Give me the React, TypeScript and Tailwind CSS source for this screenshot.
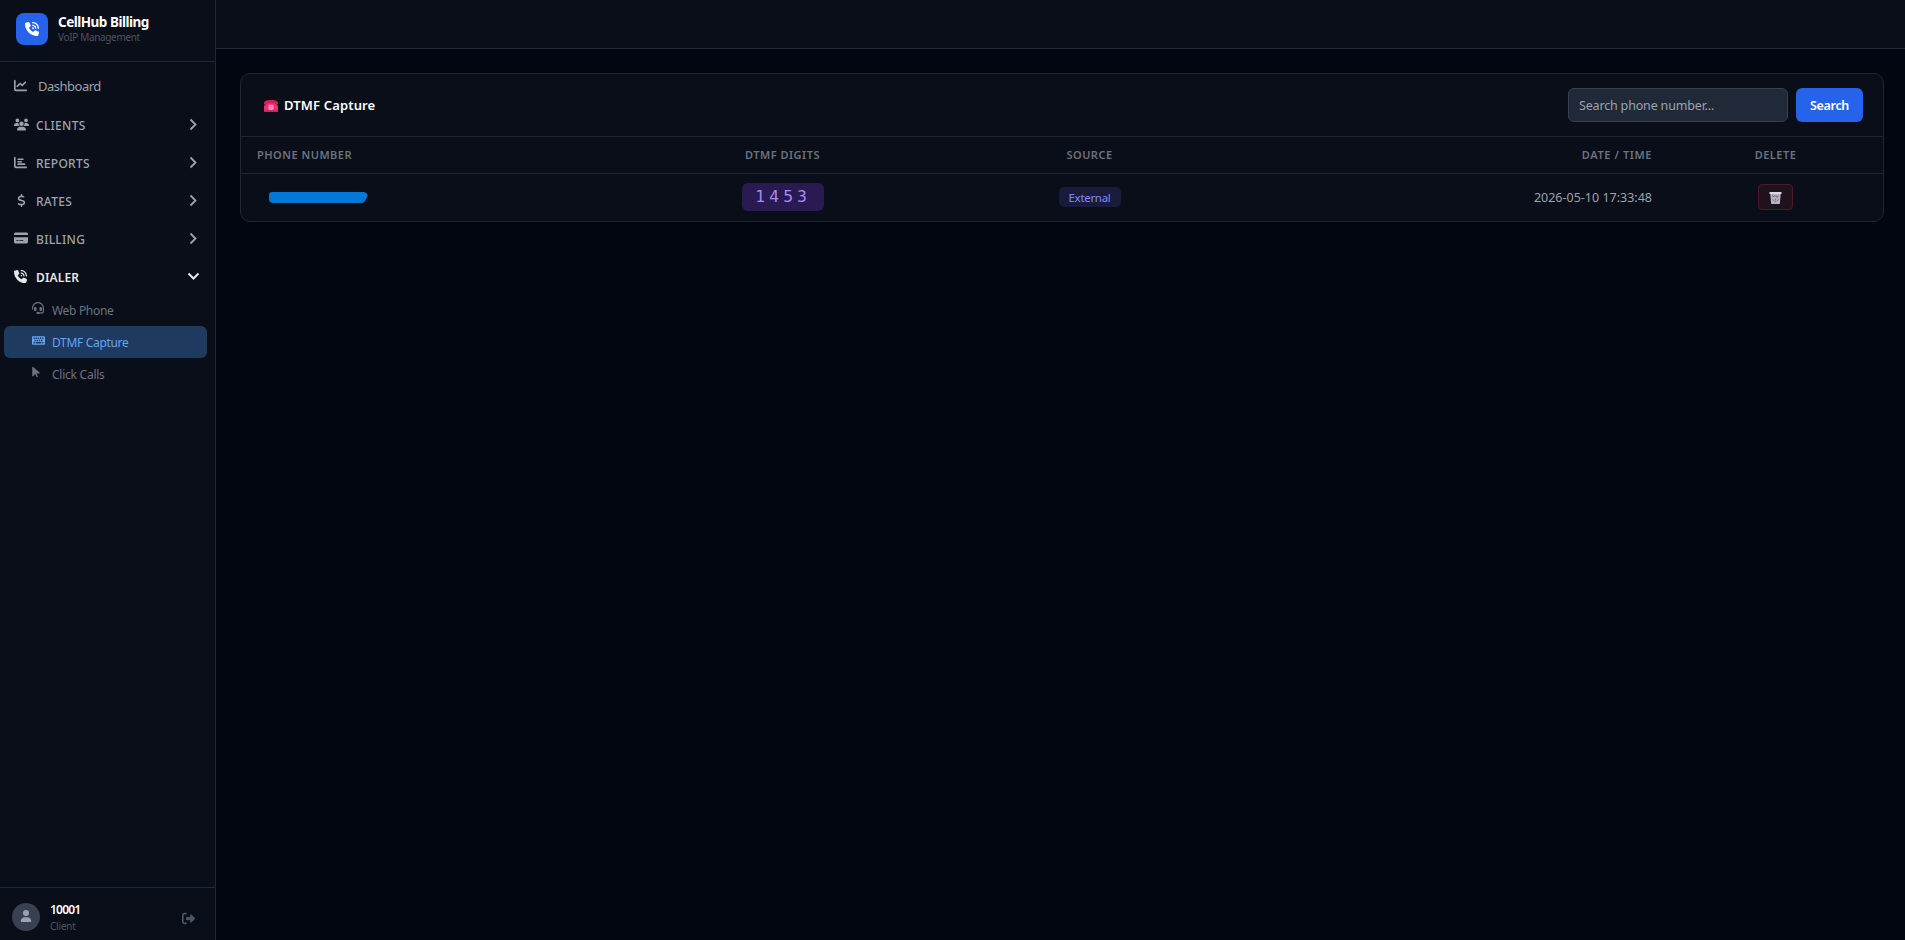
import React from "react";
import {
  FaArrowPointer,
  FaChartBar,
  FaChartLine,
  FaCreditCard,
  FaDollarSign,
  FaHeadset,
  FaPhoneVolume,
  FaRightFromBracket,
  FaUser,
  FaUsers,
} from "react-icons/fa6";
import { FaKeyboard } from "react-icons/fa";

function Chevron({ open }: { open?: boolean }) {
  return (
    <svg width="13" height="13" viewBox="0 0 13 13" fill="none" stroke="currentColor" strokeWidth={open ? 2 : 1.8} className="mb-0.5 shrink-0">
      <path d={open ? "M1.500 4.500l5 5 5-5" : "M3.500 1.500l5 5-5 5"} />
    </svg>
  );
}

const groups = [
  { label: "CLIENTS", icon: <FaUsers size={15} /> },
  { label: "REPORTS", icon: <FaChartBar size={13} /> },
  { label: "RATES", icon: <FaDollarSign size={13} className="ml-px" /> },
  { label: "BILLING", icon: <FaCreditCard size={14} /> },
];

function Phone() {
  return (
    <svg width="14" height="12" viewBox="0 0 14 12" className="mt-0.5 shrink-0">
      <path d="M2.600 3h8.800L14 12H0z" fill="#ee2a6c" />
      <path d="M0 4.600V2.400C1 .4 3.500 0 7 0s6 .4 7 2.400v2.200h-3.400V3H3.400v1.600z" fill="#d3214f" />
      <path d="M0 6l2-2h10l2 2v4.500H0z" fill="#f02d72" />
      <path d="M0 10.500h14V12H0z" fill="#c4284f" />
      <rect x="4.500" y="4.800" width="5" height="5" rx="1" fill="#f4a0c4" />
      <path d="M5.500 6.500h3M5.500 8.200h3" stroke="#d9598e" strokeWidth="0.6" />
    </svg>
  );
}

function Basket() {
  return (
    <svg width="13" height="12" viewBox="0 0 13 12">
      <path d="M1.200 1h10.600l-1 11H2.200z" fill="#b9b4c4" />
      <path d="M3 3l1.500 2M5.500 3L4 5.500M6 5l1-1.500L8.500 6M9.500 3.500L8 5.500M3.500 7l1.500 2M6.500 6.500v2M9.500 7L8 9M5.500 10l1-1 1 1" stroke="#6f6678" strokeWidth="0.8" fill="none" />
      <path d="M.5 0h12v2H.5z" fill="#ddd8e6" />
    </svg>
  );
}

export default function App() {
  return (
    <div className="flex h-[940px] w-full overflow-hidden bg-[#020611] font-['Noto_Sans','Segoe_UI',sans-serif] text-[13px] text-[#9ca3af]">
      <aside className="flex w-[216px] shrink-0 flex-col border-r border-[#1f2533] bg-[#0a0e18]">
        <header className="flex h-[62px] shrink-0 items-start gap-[10px] border-b border-[#1f2937] pt-[13px] pl-4">
          <span className="flex size-8 items-center justify-center rounded-lg bg-[#2563eb] text-white">
            <FaPhoneVolume size={14} />
          </span>
          <div className="flex flex-col">
            <b className="text-[13.5px] leading-[18px] font-bold tracking-[-0.5px] text-white">CellHub Billing</b>
            <span className="text-[10px] leading-[12px] tracking-[-0.34px] text-[#4b5563]">VoIP Management</span>
          </div>
        </header>
        <nav className="flex grow flex-col">
          <a className="mt-[5px] flex h-[39px] items-center pl-[14px]">
            <span className="mb-0.5 flex w-6 items-center"><FaChartLine size={13} /></span>
            <span className="text-[13px] tracking-[-0.5px]">Dashboard</span>
          </a>
          {groups.map((g) => (
            <a key={g.label} className="flex h-[38px] items-center pr-[15px] pl-[14px]">
              <span className="mb-0.5 flex w-[22px] items-center">{g.icon}</span>
              <span className="grow pt-0.5 text-[12px] font-medium tracking-[0.28px]">{g.label}</span>
              <Chevron />
            </a>
          ))}
          <a className="flex h-9 items-center pr-[15px] pl-[14px] text-[#e5e7eb]">
            <span className="flex w-[22px] items-center"><FaPhoneVolume size={13} /></span>
            <span className="grow pt-1 text-[12px] font-semibold tracking-[0.15px]">DIALER</span>
            <Chevron open />
          </a>
          <div className="mr-2 ml-1 flex flex-col text-[12px] tracking-[-0.32px] text-[#6b7280]">
            <a className="flex h-8 items-center pl-7">
              <span className="mb-1 flex w-5 items-center"><FaHeadset size={12} /></span>
              <span className="pt-0.5">Web Phone</span>
            </a>
            <a className="flex h-8 items-center rounded-md bg-[#1e3a5f] pl-7 text-[#60a5fa]">
              <span className="mb-1 flex w-5 items-center"><FaKeyboard size={13} /></span>
              <span className="pt-0.5">DTMF Capture</span>
            </a>
            <a className="flex h-8 items-center pl-[26px]">
              <span className="mb-1 flex w-[22px] items-center"><FaArrowPointer size={12} /></span>
              <span className="pt-0.5 tracking-[-0.25px]">Click Calls</span>
            </a>
          </div>
        </nav>
        <footer className="flex h-[53px] shrink-0 items-center border-t border-[#1f2937] pt-[6px] pr-5 pl-3">
          <span className="flex size-7 items-center justify-center rounded-full bg-[#374151]"><FaUser size={12} className="mb-0.5" /></span>
          <div className="ml-[10px] flex grow flex-col pt-0.5">
            <b className="text-[12px] leading-4 font-semibold tracking-[-0.8px] text-white">10001</b>
            <span className="text-[10px] leading-4 tracking-[-0.2px] text-[#4b5563]">Client</span>
          </div>
          <FaRightFromBracket size={13} className="mt-0.5 text-[#4b5563]" />
        </footer>
      </aside>
      <main className="flex grow flex-col">
        <div className="h-[49px] shrink-0 border-b border-[#1f2937] bg-[#0a0e18]" />
        <section className="mt-6 mr-[21px] ml-6 flex flex-col overflow-hidden rounded-[10px] border border-[#1f2533] bg-[#0a0e18]">
          <div className="flex h-[63px] items-center border-b border-[#1f2533] pr-5 pl-[23px]">
            <Phone />
            <h1 className="ml-[6px] grow pt-0.5 text-[13px] font-semibold tracking-[0.15px] text-white">DTMF Capture</h1>
            <input placeholder="Search phone number..." className="h-[34px] w-[220px] rounded-md border border-[#374151] bg-[#1f2937] px-[10px] pt-px text-[12.5px] tracking-[-0.17px] placeholder:text-[#9ca3af]" />
            <button className="ml-2 h-[34px] w-[67px] rounded-md bg-[#2563eb] pt-0.5 text-[12.5px] font-semibold tracking-[-0.3px] text-white">Search</button>
          </div>
          <div className="grid h-[37px] grid-cols-[369px_345px_269px_1fr_215px] items-center border-b border-[#1f2533] pt-px text-[11px] font-semibold tracking-[0.5px] text-[#6b7280]">
            <span className="pl-4">PHONE NUMBER</span>
            <span className="text-center">DTMF DIGITS</span>
            <span className="text-center">SOURCE</span>
            <span className="pr-4 text-right tracking-[0.6px]">DATE / TIME</span>
            <span className="text-center">DELETE</span>
          </div>
          <div className="grid h-[47px] grid-cols-[369px_345px_269px_1fr_215px] items-center">
            <span className="pl-7">
              <svg width="99" height="11" viewBox="0 0 99 11"><path d="M3 0h92q4 1 3.500 4L96 9q-1 2-4 2H3Q0 10 0 8V3Q0 0 3 0z" fill="#0078d7" /></svg>
            </span>
            <span className="flex justify-center pb-0.5">
              <span className="flex h-7 w-[82px] items-center rounded-md bg-[#2a1a52] pt-[3px] pl-[14px] font-['DejaVu_Sans',sans-serif] text-[15.5px] tracking-[4px] text-[#a78bfa]">1453</span>
            </span>
            <span className="flex justify-center pb-0.5">
              <span className="flex h-5 w-[62px] items-center justify-center rounded-[5px] bg-[#181b3a] pt-0.5 text-[11.5px] tracking-[-0.3px] text-[#818cf8]">External</span>
            </span>
            <span className="pt-0.5 pr-4 text-right text-[12.5px]">2026-05-10 17:33:48</span>
            <span className="flex justify-center pb-0.5">
              <button className="flex h-[26px] w-[35px] items-center justify-center rounded border border-[#4c1a22] bg-[#20121c] pt-0.5"><Basket /></button>
            </span>
          </div>
        </section>
      </main>
    </div>
  );
}
